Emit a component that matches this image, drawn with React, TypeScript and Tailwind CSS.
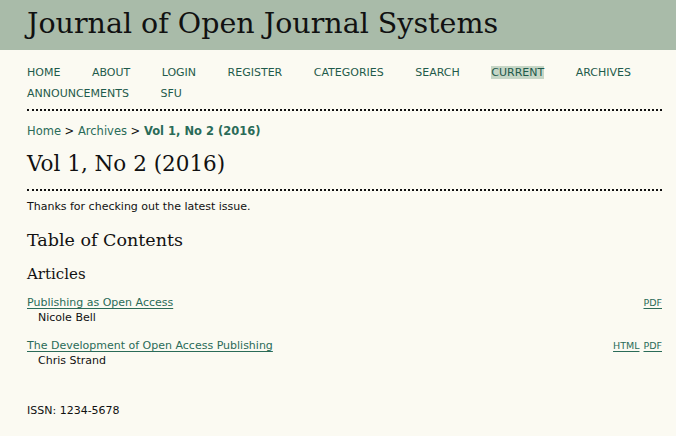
const NAV = ["Home", "About", "Login", "Register", "Categories", "Search", "Current", "Archives", "Announcements", "SFU"];

const ARTICLES = [
  { title: "Publishing as Open Access", author: "Nicole Bell", galleys: ["PDF"] },
  { title: "The Development of Open Access Publishing", author: "Chris Strand", galleys: ["HTML", "PDF"] },
];

const serif = "font-['Georgia','DejaVu_Serif',serif]";

export default function App() {
  return (
    <div className="min-h-[436px] w-full bg-[#fbfaf2] font-['Verdana','DejaVu_Sans',sans-serif] text-[#111]">
      {/* Journal title */}
      <header className="h-[50px] bg-[#a9bba9] pl-[27px] pt-[5px]">
        <h1 className={`${serif} text-[28.5px] leading-[38px] text-[#111]`}>Journal of Open Journal Systems</h1>
      </header>

      <div className="pl-[27px] pr-[14px]">
        {/* Navigation */}
        <nav className="border-b-2 border-dotted border-[#111] pt-[12px] pb-[5px]">
          <ul className="flex flex-wrap gap-x-[31.5px] text-[11px] uppercase leading-[21px] text-[#1f5a4b]">
            {NAV.map((item) => (
              <li key={item}>
                <span className={item === "Current" ? "bg-[#c6d6c6]" : ""}>{item}</span>
              </li>
            ))}
          </ul>
        </nav>

        {/* Breadcrumb */}
        <p className="mt-[13px] text-[11.5px] leading-[15px]">
          <span className="text-[#2a6b58]">Home</span> &gt; <span className="text-[#2a6b58]">Archives</span> &gt;{" "}
          <span className="font-bold text-[#2a6b58]">Vol 1, No 2 (2016)</span>
        </p>

        <h2 className={`${serif} border-b-2 border-dotted border-[#111] pt-[10px] pb-[10px] text-[21.5px] leading-[30px]`}>
          Vol 1, No 2 (2016)
        </h2>

        <p className="mt-[9px] text-[11px] leading-[14px]">Thanks for checking out the latest issue.</p>

        <h3 className={`${serif} mt-[13px] text-[17.5px] leading-[26px]`}>Table of Contents</h3>
        <h4 className={`${serif} mt-[10px] text-[15px] leading-[22px]`}>Articles</h4>

        <ul className="mt-[11px] text-[11px]">
          {ARTICLES.map((a) => (
            <li key={a.title} className="mb-[14px]">
              <div className="flex items-start justify-between leading-[14px]">
                <span className="text-[#2a6b58] underline underline-offset-2">{a.title}</span>
                <span className="flex gap-[4px] text-[9.5px] text-[#2a6b58]">
                  {a.galleys.map((g) => (
                    <span key={g} className="underline underline-offset-2">{g}</span>
                  ))}
                </span>
              </div>
              <p className="pl-[11px] leading-[15px]">{a.author}</p>
            </li>
          ))}
        </ul>

        <p className="mt-[35px] text-[11px]">ISSN: 1234-5678</p>
      </div>
    </div>
  );
}
